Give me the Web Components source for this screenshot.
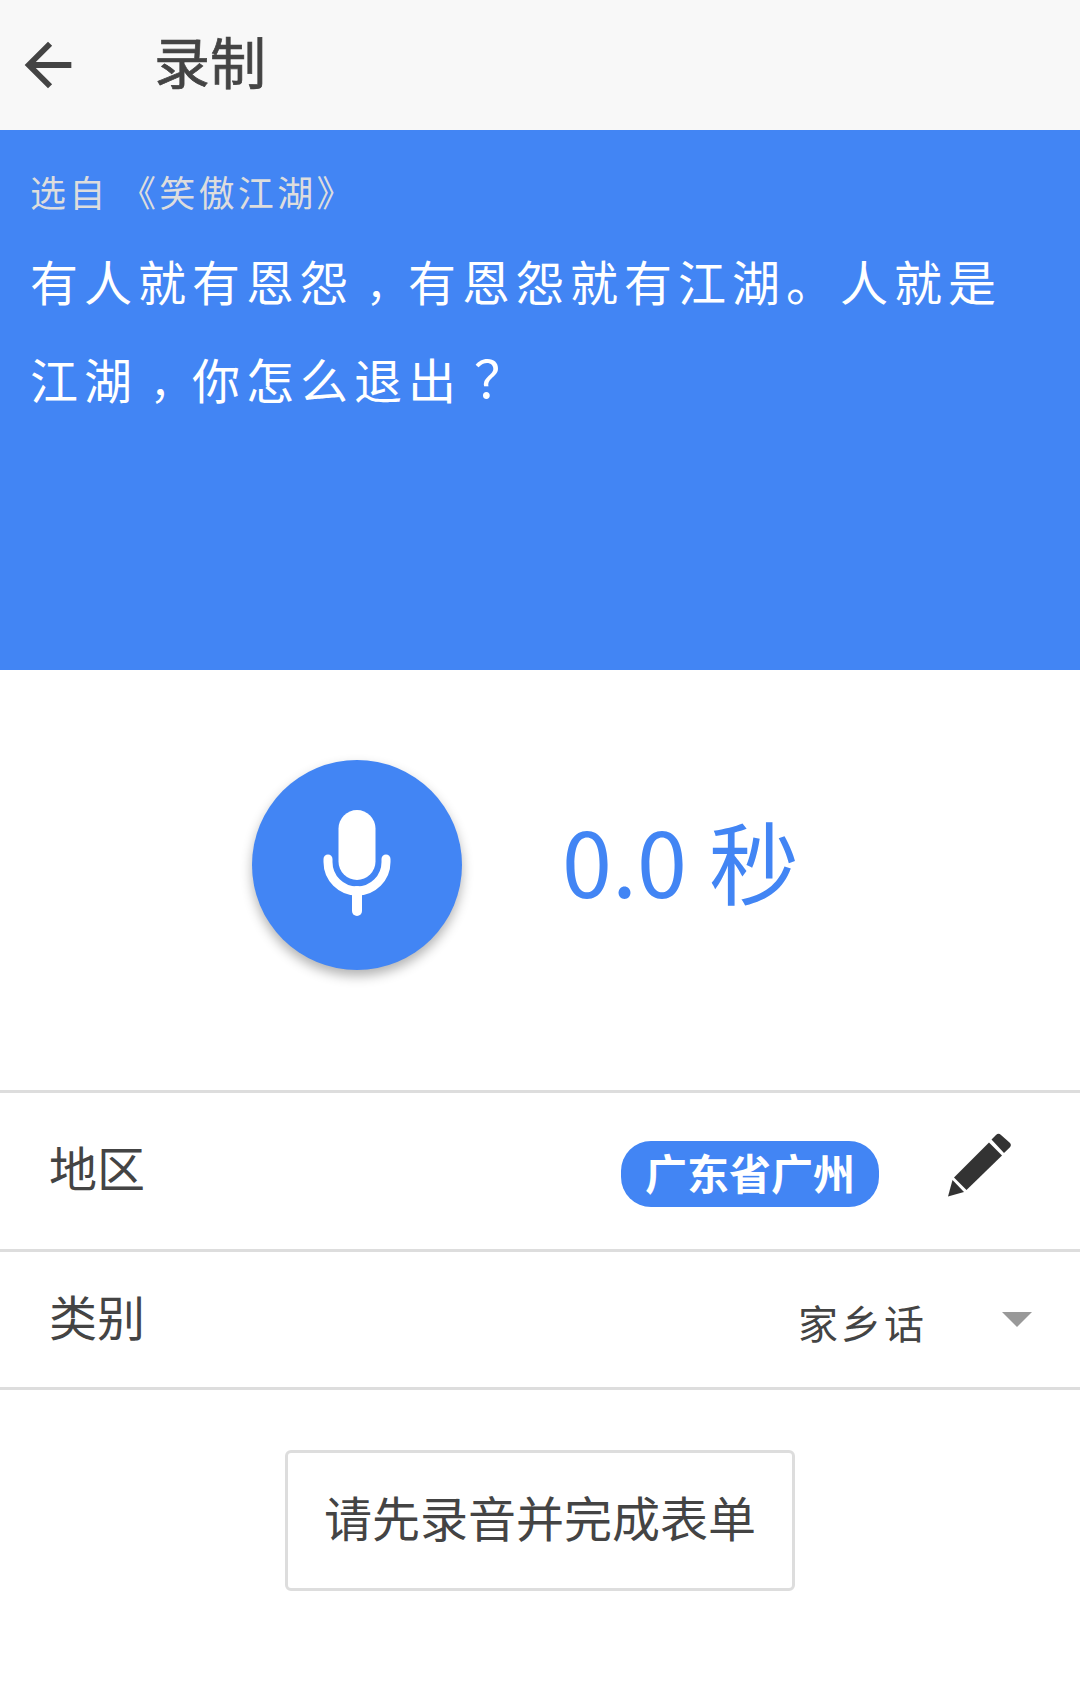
<!DOCTYPE html>
<html lang="zh">
<head>
<meta charset="utf-8">
<title>录制</title>
<style>
  html, body { margin: 0; background: #fff; }
  body { font-family: "Noto Sans CJK SC", "Noto Sans", sans-serif; color: #444; }
</style>
</head>
<body>
<app-header>录制</app-header>
<quote-hero source="选自 《笑傲江湖》">有人就有恩怨<span>，</span>有恩怨就有江湖。人就是<br>江湖<span>，</span>你怎么退出<span class="q">？</span></quote-hero>
<record-panel seconds="0.0 秒"></record-panel>
<form-row label="地区" size="159">
  <region-chip>广东省广州</region-chip>
  <edit-icon></edit-icon>
</form-row>
<form-row class="last" label="类别" size="141">
  <select-value>家乡话</select-value>
</form-row>
<submit-button>请先录音并完成表单</submit-button>

<script>
const define = (name, html) => {
  customElements.define(name, class extends HTMLElement {
    constructor() {
      super();
      this.attachShadow({ mode: "open" }).innerHTML = html;
    }
  });
};

define("app-header", `
<style>
  :host { display: flex; align-items: center; height: 130px; background: #f8f8f8; color: #444; }
  svg { width: 70px; height: 70px; margin-left: 13px; fill: #444; flex: none; }
  .title { margin: 0 0 10px 71px; font-size: 56px; line-height: 1; -webkit-text-stroke: .7px #444; }
</style>
<svg viewBox="0 0 24 24"><path d="M20 11H7.83l5.59-5.59L12 4l-8 8 8 8 1.41-1.41L7.83 13H20v-2z"/></svg>
<span class="title"><slot></slot></span>`);

class QuoteHero extends HTMLElement {
  connectedCallback() {
    this.attachShadow({ mode: "open" }).innerHTML = `
    <style>
      :host { display: block; box-sizing: border-box; height: 540px; padding: 34px 30px 0; background: #4285f4; color: #fff; }
      .source { font-size: 36px; letter-spacing: 3.3px; line-height: 54px; color: #ddd; white-space: pre; }
      .text { font-size: 48px; letter-spacing: 6px; line-height: 98px; margin-top: 13px; }
      /* full-width punctuation sits mid-cell in the reference font */
      ::slotted(span) { margin-left: 12px; font-size: 42px; line-height: 0; letter-spacing: 0; }
      ::slotted(.q) { font-size: 52px; }
    </style>
    <div class="source">${this.getAttribute("source")}</div>
    <div class="text"><slot></slot></div>`;
  }
}
customElements.define("quote-hero", QuoteHero);

class RecordPanel extends HTMLElement {
  connectedCallback() {
    this.attachShadow({ mode: "open" }).innerHTML = `
    <style>
      :host { display: flex; align-items: center; box-sizing: border-box; height: 420px; padding: 0 0 30px 252px; gap: 100px; background: #fff; }
      .mic { width: 210px; height: 210px; border-radius: 50%; background: #4285f4; box-shadow: 0 6px 12px rgba(0,0,0,.3); display: flex; align-items: center; justify-content: center; flex: none; }
      svg { width: 80px; height: 120px; margin-top: 2px; }
      .time { font-size: 90px; line-height: 1; word-spacing: 2px; color: #4285f4; margin-bottom: 12px; }
    </style>
    <div class="mic">
      <svg viewBox="0 0 80 120" fill="none" stroke="#fff" stroke-width="9" stroke-linecap="round">
        <rect x="21.500" y="4" width="37" height="70" rx="18.500" fill="#fff" stroke="none"/>
        <path d="M11 53v3a29 29 0 0 0 58 0v-3"/>
        <path d="M40 85v20" stroke-width="10"/>
      </svg>
    </div>
    <div class="time">${this.getAttribute("seconds")}</div>`;
  }
}
customElements.define("record-panel", RecordPanel);

class FormRow extends HTMLElement {
  connectedCallback() {
    this.attachShadow({ mode: "open" }).innerHTML = `
    <style>
      :host { display: flex; align-items: center; justify-content: space-between; box-sizing: border-box; height: ${this.getAttribute("size")}px; border-top: 3px solid #ddd; padding: 0 0 0 49px; background: #fff; color: #444; }
      :host(.last) { border-bottom: 3px solid #ddd; }
      .label { font-size: 48px; line-height: 1; margin-bottom: 10px; }
      .right { display: flex; align-items: center; }
    </style>
    <span class="label">${this.getAttribute("label")}</span>
    <div class="right"><slot></slot></div>`;
  }
}
customElements.define("form-row", FormRow);

define("region-chip", `
<style>
  :host { display: block; height: 66px; line-height: 62px; padding: 0 24px; margin: 6px 69px 0 0; border-radius: 30px; background: #4285f4; color: #fff; font-size: 42px; font-weight: 700; }
</style>
<slot></slot>`);

define("edit-icon", `
<style>
  :host { display: block; width: 64px; height: 64px; margin: 0 68px 12px 0; }
  svg { display: block; width: 64px; height: 64px; fill: #333; }
</style>
<svg viewBox="0 0 64 64">
  <path d="M43.500 6.500 48 2a3.500 3.500 0 0 1 5 0l8.500 7.500a3.500 3.500 0 0 1 .2 5L56 20z"/>
  <path d="M41 9.500 54 22.500 18.500 57 6 44.500z"/>
  <path d="M4.500 47 16 59 0 63.500z"/>
</svg>`);

define("select-value", `
<style>
  :host { display: flex; align-items: center; font-size: 40px; letter-spacing: 3px; line-height: 1; color: #444; margin: 4px 48px 0 0; }
  i { display: block; width: 0; height: 0; margin: 0 0 4px 75px; border-left: 15px solid transparent; border-right: 15px solid transparent; border-top: 15px solid #999; }
</style>
<slot></slot><i></i>`);

define("submit-button", `
<style>
  :host { display: block; width: fit-content; margin: 60px auto 0; }
  button { display: block; box-sizing: border-box; width: 510px; height: 141px; padding: 0 0 9px; border: 3px solid #ddd; border-radius: 6px; background: #fff; color: #444; font: 48px/1 "Noto Sans CJK SC", "Noto Sans", sans-serif; }
</style>
<button><slot></slot></button>`);
</script>
</body>
</html>
